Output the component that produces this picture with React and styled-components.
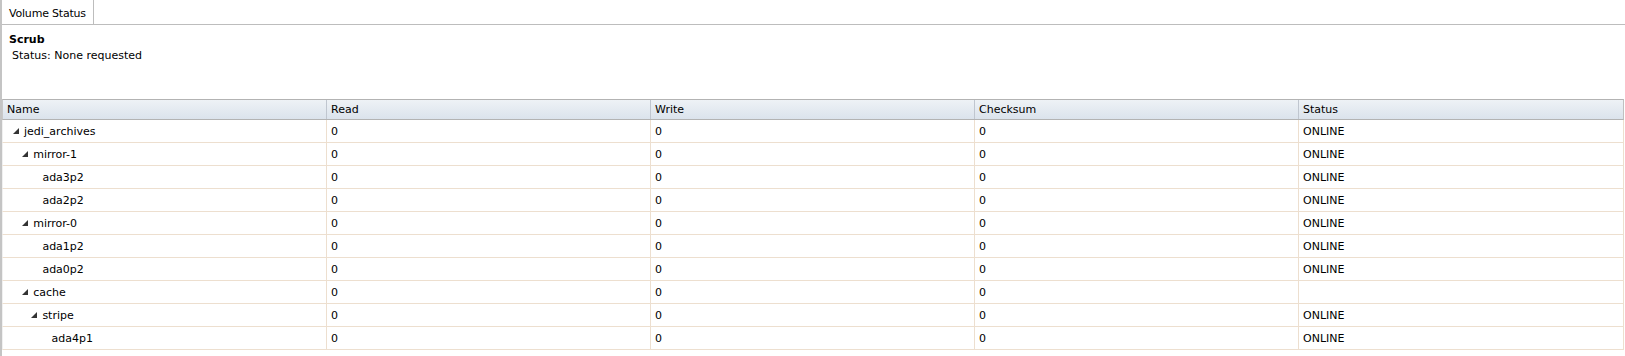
import React from 'react';
import styled, { createGlobalStyle } from 'styled-components';

const GlobalStyle = createGlobalStyle`
    html, body {
        margin: 0;
        padding: 0;
        background: #fff;
    }
    body {
        font-family: "DejaVu Sans", Verdana, sans-serif;
        font-size: 11px;
        color: #000;
    }
`;

const Panel = styled.div`
    width: 1625px;
    height: 356px;
    box-sizing: border-box;
    border-left: 2px solid #c4c4c4;
    overflow: hidden;
`;

const TabStrip = styled.div`
    display: flex;
    height: 24px;
    border-bottom: 1px solid #bdbdbd;
`;

const Tab = styled.div`
    width: 92px;
    padding-left: 7px;
    box-sizing: border-box;
    border-right: 1px solid #bdbdbd;
    display: flex;
    align-items: center;
    padding-top: 2px;
    white-space: nowrap;
    letter-spacing: -0.2px;
`;

const Section = styled.div`
    padding: 7px 0 0 7px;
    height: 67px;
`;

const SectionTitle = styled.div`
    font-weight: bold;
    line-height: 16px;
`;

const SectionLine = styled.div`
    padding-left: 3px;
    line-height: 16px;
`;

const Grid = styled.div`
    width: 1622px;
`;

const HeaderRow = styled.div`
    display: grid;
    grid-template-columns: repeat(5, 1fr);
    height: 19px;
    border-top: 1px solid #b3b3b3;
    border-bottom: 1px solid #b3b3b3;
    border-left: 1px solid #c8c8c8;
    border-right: 1px solid #c0c0c0;
    background: linear-gradient(#eef2f6, #dbe3ec);
`;

const HeaderCell = styled.div`
    display: flex;
    align-items: center;
    padding-left: 4px;
    border-right: 1px solid #c0c6cf;
    &:last-child {
        border-right: none;
    }
`;

const Row = styled.div`
    display: grid;
    grid-template-columns: repeat(5, 1fr);
    height: 22px;
    border-bottom: 1px solid #eddfcf;
    border-left: 1px solid #f0f0f0;
    border-right: 1px solid #eddfcf;
`;

const Cell = styled.div`
    display: flex;
    align-items: center;
    padding-left: 4px;
    border-right: 1px solid #eddfcf;
    white-space: nowrap;
    &:last-child {
        border-right: none;
    }
`;

const NameCell = styled(Cell)`
    padding-left: ${p => 6 + p.$level * 9.2}px;
`;

const Expander = styled.span`
    width: 15px;
    height: 10px;
    display: inline-flex;
    align-items: center;
    padding-left: 4px;
    box-sizing: border-box;
`;

const Arrow = () => (
    <svg width="6" height="6" viewBox="0 0 6 6">
        <polygon points="6,0 6,6 0,6" fill="#333" />
    </svg>
);

const rows = [
    { name: 'jedi_archives', level: 0, open: true, status: 'ONLINE' },
    { name: 'mirror-1', level: 1, open: true, status: 'ONLINE' },
    { name: 'ada3p2', level: 2, status: 'ONLINE' },
    { name: 'ada2p2', level: 2, status: 'ONLINE' },
    { name: 'mirror-0', level: 1, open: true, status: 'ONLINE' },
    { name: 'ada1p2', level: 2, status: 'ONLINE' },
    { name: 'ada0p2', level: 2, status: 'ONLINE' },
    { name: 'cache', level: 1, open: true, status: '' },
    { name: 'stripe', level: 2, open: true, status: 'ONLINE' },
    { name: 'ada4p1', level: 3, status: 'ONLINE' },
];

export default function App() {
    return (
        <>
            <GlobalStyle />
            <Panel>
                <TabStrip>
                    <Tab>Volume Status</Tab>
                </TabStrip>
                <Section>
                    <SectionTitle>Scrub</SectionTitle>
                    <SectionLine>Status: None requested</SectionLine>
                </Section>
                <Grid>
                    <HeaderRow>
                        <HeaderCell>Name</HeaderCell>
                        <HeaderCell>Read</HeaderCell>
                        <HeaderCell>Write</HeaderCell>
                        <HeaderCell>Checksum</HeaderCell>
                        <HeaderCell>Status</HeaderCell>
                    </HeaderRow>
                    {rows.map(r => (
                        <Row key={r.name}>
                            <NameCell $level={r.level}>
                                <Expander>{r.open && <Arrow />}</Expander>
                                {r.name}
                            </NameCell>
                            <Cell>0</Cell>
                            <Cell>0</Cell>
                            <Cell>0</Cell>
                            <Cell>{r.status}</Cell>
                        </Row>
                    ))}
                </Grid>
            </Panel>
        </>
    );
}
